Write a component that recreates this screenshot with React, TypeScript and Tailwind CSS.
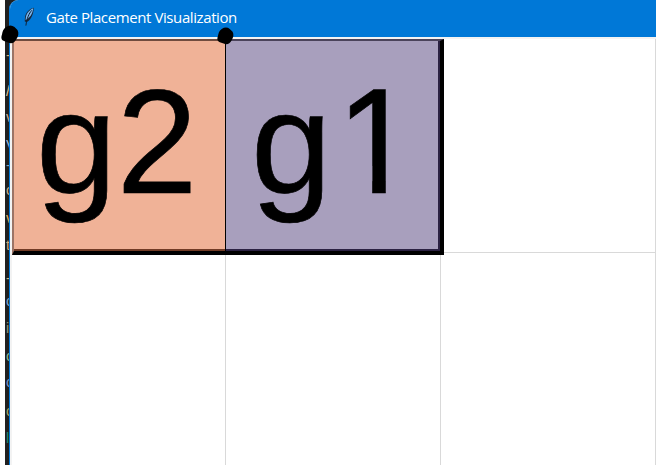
const fragments = [
  { char: "-", color: "text-[#d8ae73]", top: "top-[43px]" },
  { char: "/", color: "text-[#e3c69a]", top: "top-[79px]" },
  { char: "v", color: "text-[#d2b59d]", top: "top-[105px]" },
  { char: "V", color: "text-[#9eb8da]", top: "top-[133px]" },
  { char: "-", color: "text-[#7fa3ba]", top: "top-[153px]" },
  { char: "c", color: "text-[#d0b287]", top: "top-[178px]" },
  { char: "v", color: "text-[#e5b566]", top: "top-[206px]" },
  { char: "t", color: "text-[#d1aa78]", top: "top-[233px]" },
  { char: "-", color: "text-[#c6b887]", top: "top-[266px]" },
  { char: "c", color: "text-[#7fa9d3]", top: "top-[289px]" },
  { char: "i", color: "text-[#8d9877]", top: "top-[316px]" },
  { char: "c", color: "text-[#8fbb91]", top: "top-[344px]" },
  { char: "c", color: "text-[#7995cc]", top: "top-[370px]" },
  { char: "c", color: "text-[#a8a965]", top: "top-[399px]" },
  { char: "l", color: "text-[#198a70]", top: "top-[426px]" },
];

function Feather() {
  return (
    <svg className="h-5 w-3" viewBox="0 0 12 20">
      <path d="M10.5 0.7C6.5 1.5 2.5 5.8 2 10.2L1.7 14.2 3.2 15.3C7.2 13.7 10.5 8.2 10.8 1Z" fill="#15283d" />
      <path d="M10.2 1.2C5.6 3.3 2.6 7.2 2.6 13C6.8 11 9.8 6.5 10.2 1.2Z" fill="#79b5ed" />
      <path d="M8.8 3.3C6 6.5 3.9 11 2.9 18.6" fill="none" stroke="#102238" strokeWidth="1" />
    </svg>
  );
}

function Blob({ className }: { className: string }) {
  return (
    <svg className={className} viewBox="0 0 18 19">
      <path d="M5 2C8 0 11 0 13.5 2L16.5 5C18 8 17.5 11 15.5 14C13.5 18 10.5 19 7 17.5L3 16C0 15 0 12 1 9.5C1.5 7 2 4 5 2Z" fill="black" />
    </svg>
  );
}

export default function App() {
  return (
    <div className="relative flex h-[465px] w-[656px] overflow-hidden bg-white">
      <div className="w-[5px] shrink-0 bg-white" />
      <div className="relative w-1 shrink-0 overflow-hidden bg-[#202020] font-['Liberation_Sans',sans-serif] text-[14px] leading-6">
        {fragments.map((f) => (
          <span key={f.top} className={`absolute left-px ${f.color} ${f.top}`}>{f.char}</span>
        ))}
      </div>
      <div className="min-w-0 flex-1 bg-[#202020]">
        <div className="flex h-full flex-col overflow-hidden rounded-tl-[9px] border-l border-[#0078d7] bg-[#f3f3f3]">
          <header className="flex h-[37px] shrink-0 items-center bg-[#0078d7] pb-[3px] pl-[13px]">
            <Feather />
            <h1 className="ml-[11px] whitespace-nowrap font-['Open_Sans',sans-serif] text-[15px] leading-5 tracking-[-0.4px] text-white">Gate Placement Visualization</h1>
          </header>
          <main className="mt-[2px] ml-[2px] grid flex-1 grid-cols-[214px_215px_215px] grid-rows-[214px_212px] bg-white">
            <section className="z-10 h-[216px] w-[213px] overflow-hidden border-t-2 border-b-[4px] border-l-2 border-t-[#704b3e] border-b-black border-l-[#9c7466] bg-[#f0b297] shadow-[inset_0_-2px_0_#713b25]">
              <div className="mt-[22px] ml-[22px] flex font-['Liberation_Sans',Arial,sans-serif] text-[145px] leading-[160px] text-black [-webkit-text-stroke:0.7px_black]">
                <span>g</span>
                <span className="origin-[50%_81%] scale-y-[1.02]">2</span>
              </div>
            </section>
            <section className="z-10 -ml-px h-[216px] w-[219px] overflow-hidden border-t-2 border-r-[4px] border-b-[4px] border-l border-t-[#4b435b] border-r-black border-b-black border-l-black bg-[#a89fbd] shadow-[inset_-2px_-2px_0_#2b2142]">
              <div className="mt-[22px] ml-[25px] flex font-['Liberation_Sans',Arial,sans-serif] text-[145px] leading-[160px] text-black [-webkit-text-stroke:0.7px_black]">
                <span>g</span>
                <span className="origin-[50%_81%] translate-x-[4.5px] scale-y-[1.035] [clip-path:polygon(13%_0,61.5%_0,61.5%_100%,44.7%_100%,44.7%_65%,13%_65%)]">1</span>
              </div>
            </section>
            <div className="border-r border-b border-[#d9d9d9]" />
            <div className="border-r border-[#d9d9d9]" />
            <div className="border-r border-[#d9d9d9]" />
            <div className="border-r border-[#d9d9d9]" />
          </main>
        </div>
      </div>
      <Blob className="absolute top-[25px] left-px z-20 h-[19px] w-[18px]" />
      <Blob className="absolute top-[27px] left-[217px] z-20 h-[18px] w-[17px]" />
    </div>
  );
}
